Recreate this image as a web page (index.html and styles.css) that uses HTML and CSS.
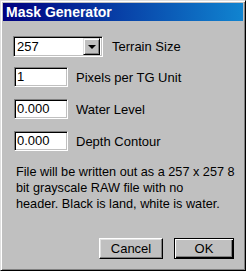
FILE: index.html
```html
<!DOCTYPE html>
<html lang="en">
<head>
    <meta charset="UTF-8">
    <title>Mask Generator</title>
    <link rel="stylesheet" href="styles.css">
</head>
<body>
    <div class="window">
        <div class="title-bar">Mask Generator</div>
        <div class="content">
            <div class="row row-combo">
                <div class="combo">
                    <span class="combo-value">257</span>
                    <span class="combo-button"><span class="arrow"></span></span>
                </div>
                <span class="label">Terrain Size</span>
            </div>
            <div class="row">
                <div class="field">1</div>
                <span class="label">Pixels per TG Unit</span>
            </div>
            <div class="row">
                <div class="field">0.000</div>
                <span class="label">Water Level</span>
            </div>
            <div class="row">
                <div class="field">0.000</div>
                <span class="label">Depth Contour</span>
            </div>
            <p class="note">File will be written out as a 257 x 257 8<br>bit grayscale RAW file with no<br>header. Black is land, white is water.</p>
            <div class="buttons">
                <button class="btn">Cancel</button>
                <button class="btn btn-default">OK</button>
            </div>
        </div>
    </div>
</body>
</html>
```

FILE: styles.css
```css
body {
    margin: 0;
    font-family: "Liberation Sans", Arial, sans-serif;
    font-size: 13px;
    color: #000;
}

.window {
    width: 246px;
    height: 271px;
    box-sizing: border-box;
    background-color: #c0c0c0;
    border: 1px solid;
    border-color: #dfdfdf #000 #000 #dfdfdf;
    box-shadow: inset 1px 1px #fff, inset -1px -1px #808080;
    padding: 2px;
    display: flex;
    flex-direction: column;
}

.title-bar {
    height: 18px;
    line-height: 18px;
    padding-left: 3px;
    color: #fff;
    font-weight: bold;
    font-size: 14px;
    background: linear-gradient(to right, #000080, #1084d0);
}

.content {
    flex: 1;
    padding: 15px 0 9px 10px;
    display: flex;
    flex-direction: column;
}

.row {
    display: flex;
    align-items: center;
    height: 20px;
    margin-bottom: 12px;
}

.row-combo {
    height: 21px;
    margin-bottom: 10px;
}

/* sunken edit box */
.field,
.combo {
    box-sizing: border-box;
    background: #fff;
    border: 1px solid;
    border-color: #808080 #fff #fff #808080;
    box-shadow: inset 1px 1px #000, inset -1px -1px #c0c0c0;
}

.field {
    width: 54px;
    height: 20px;
    line-height: 18px;
    padding-left: 2px;
    margin-left: 1px;
}

.combo {
    width: 90px;
    height: 21px;
    display: flex;
    align-items: center;
    padding: 2px;
}

.combo-value {
    flex: 1;
    padding-left: 1px;
}

.combo-button {
    width: 17px;
    height: 17px;
    box-sizing: border-box;
    background: #c0c0c0;
    border: 1px solid;
    border-color: #dfdfdf #000 #000 #dfdfdf;
    box-shadow: inset 1px 1px #fff, inset -1px -1px #808080;
    display: flex;
    align-items: center;
    justify-content: center;
}

.arrow {
    width: 0;
    height: 0;
    border-left: 4px solid transparent;
    border-right: 4px solid transparent;
    border-top: 4px solid #000;
}

.label {
    margin-left: 8px;
}

.row-combo .label {
    margin-left: 9px;
}

.note {
    margin: 1px 0 0 3px;
    line-height: 16px;
    font-size: 12.7px;
}

.buttons {
    display: flex;
    justify-content: flex-end;
    gap: 11px;
    margin-top: auto;
    padding-right: 9px;
}

.btn {
    width: 64px;
    height: 21px;
    box-sizing: border-box;
    font-family: "Liberation Sans", Arial, sans-serif;
    font-size: 13px;
    background: #c0c0c0;
    border: 1px solid;
    border-color: #fff #000 #000 #fff;
    box-shadow: inset -1px -1px #808080, inset 1px 1px #dfdfdf;
    padding: 0;
}

.btn-default {
    width: 60px;
    border: 1px solid #000;
    box-shadow: inset 1px 1px #fff, inset -1px -1px #000, inset -2px -2px #808080;
}
```
